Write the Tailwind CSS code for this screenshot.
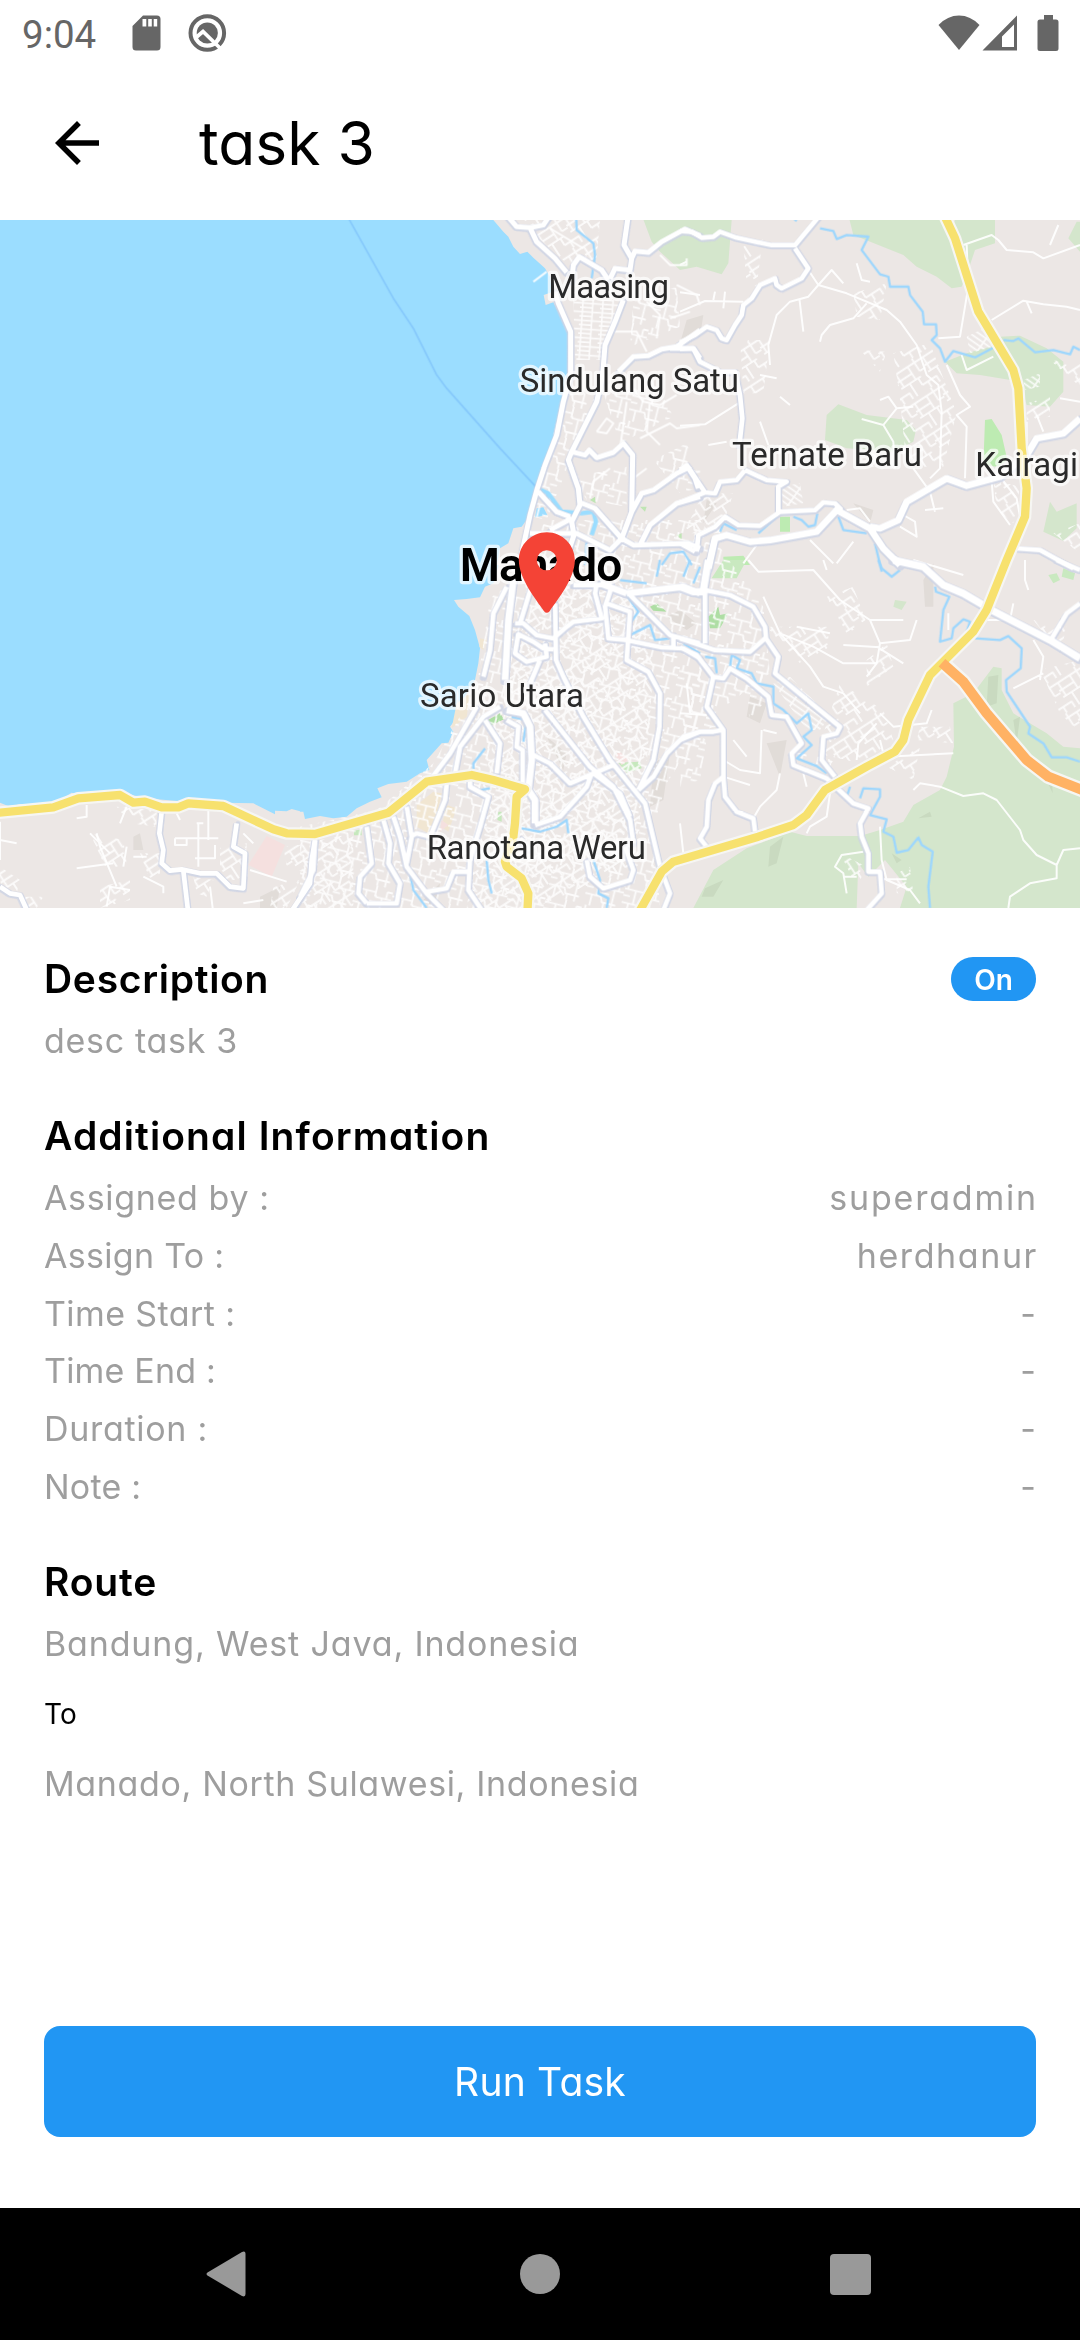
<!DOCTYPE html>
<html lang="en">
<head>
<meta charset="utf-8">
<title>task 3</title>
<script src="https://cdn.jsdelivr.net/npm/@tailwindcss/browser@4"></script>
</head>
<body class="bg-white">
<div class="flex h-[2340px] w-[1080px] flex-col overflow-hidden bg-white font-['Inter',sans-serif] text-black [font-feature-settings:'cv11']">

  <!-- Status bar -->
  <div class="flex h-[66px] shrink-0 items-center pl-[22px] text-[#666]">
    <span class="w-[76px] pt-[3px] font-['Roboto',sans-serif] text-[38.5px] leading-[44px]">9:04</span>
    <svg class="ml-[34px] h-[36px] w-[30px]" viewBox="0 0 30 36" fill="currentColor"><path fill-rule="evenodd" d="M11 .5H25Q28.500 .5 28.500 4V32Q28.500 35.500 25 35.500H4Q.5 35.500 .5 32V11ZM10.500 4V11.500H14.300V4ZM16.200 4V11.500H19.800V4ZM21.700 4V11.500H25.200V4Z"/></svg>
    <svg class="ml-[26px] h-[40px] w-[40px]" viewBox="0 0 40 40" fill="none"><circle cx="19.300" cy="20" r="16.800" stroke="currentColor" stroke-width="4"/><circle cx="19.300" cy="20" r="10.600" fill="currentColor"/><path d="M8 24.500 15 18.500 35 38" stroke="#fff" stroke-width="3.800"/></svg>
    <svg class="ml-auto h-[36px] w-[42px]" viewBox="0 0 42 36" fill="currentColor"><path d="M.5 10Q9.500 .5 21 .5T41.500 10L21 35Z"/></svg>
    <svg class="ml-[2px] h-[36px] w-[36px]" viewBox="0 0 36 36" fill="currentColor"><path fill-rule="evenodd" d="M.5 35.500 35 .5V35.500ZM20 21.500V32H32V9.500Z"/></svg>
    <svg class="mr-[21px] ml-[19px] h-[36px] w-[22px]" viewBox="0 0 22 36" fill="currentColor"><path d="M7 0h9v4.500h3Q21.500 4.500 21.500 7V33.500Q21.500 36 19 36H3Q.5 36 .5 33.500V7Q.5 4.500 3 4.500H7Z"/></svg>
  </div>

  <!-- App bar -->
  <header class="flex h-[154px] shrink-0 items-center pl-[44px]">
    <svg class="size-[66px]" viewBox="0 0 24 24"><path d="M20 11H7.830l5.590-5.590L12 4l-8 8 8 8 1.410-1.410L7.830 13H20v-2z"/></svg>
    <h1 class="ml-[89px] text-[60.5px] leading-[80px]">task 3</h1>
  </header>

  <!-- Map, in thirds of a pixel -->
  <svg class="block h-[688px] w-[1080px] shrink-0" viewBox="0 660 3240 2064" fill="none" stroke-linejoin="round">
    <defs>
      <pattern id="mesh" width="112" height="96" patternUnits="userSpaceOnUse" patternTransform="rotate(14)">
        <path d="M0 20H60L66 34H112M10 0V20M34 20V62M0 62H48L54 78H96M62 34V0M84 34V96M20 62V96M96 12H112M96 12V34M60 96V78M48 50H70M0 40H20" stroke="#fff" stroke-width="5.500" fill="none"/>
      </pattern>
      <pattern id="mesh2" width="96" height="104" patternUnits="userSpaceOnUse" patternTransform="rotate(-33)">
        <path d="M0 14H96M0 38H52M0 60H70M30 60V104M52 14V60M76 0V44M76 44H96M10 14V60M60 84H96M60 84V60M0 84H14V104M80 84V104" stroke="#fff" stroke-width="5.500" fill="none"/>
      </pattern>
      <pattern id="grid" width="60" height="26" patternUnits="userSpaceOnUse" patternTransform="rotate(4)">
        <path d="M0 5H60M0 18H40M8 0V26M38 0V26" stroke="#fff" stroke-width="5" fill="none"/>
      </pattern>
      <pattern id="rows" width="50" height="15" patternUnits="userSpaceOnUse" patternTransform="rotate(35)">
        <path d="M0 5H50M6 0V15" stroke="#fff" stroke-width="5" fill="none"/>
      </pattern>

      <g id="main-roads">
        <g transform="translate(900 645)" stroke-width="15">
          <path d="M620 0 650 35 690 38 710 80 765 130 800 172M765 230 775 265 812 350 812 480 790 560 770 660 735 750 712 820 690 900 660 1040M690 38 730 30 750 0M985 0 972 90 995 130 1005 108 1045 112 1085 80 1155 42 1200 62M995 130 990 165 945 160 930 192M815 200 820 150 838 125 905 165 925 195M970 255 945 320 915 390 908 480 890 560 850 640 815 710 805 735 835 820 840 870 815 920 822 960 795 1040M815 710 855 720 868 705 890 728 940 712 970 685 998 720 995 890 965 970M840 862 885 880 965 970 1000 990 1165 985 1200 1000M750 945 815 910M690 955 830 955 930 1005 965 970M715 830 770 890 810 905M955 470 1000 425 1045 422 1085 402 1130 395 1200 345M1110 400 1180 400 1200 430M995 890 1025 835 1060 825 1130 775 1165 758 1185 790 1195 820M1020 990 1050 930 1130 865 1200 845"/>
        </g>
        <g transform="translate(2040 645)" stroke-width="14">
          <path d="M0 48 35 50 65 68 100 65 120 50 170 68 235 82 275 90 345 90 420 0M345 100 385 160 365 190 305 220 290 210 285 190 240 210 215 250 190 270 185 300 165 330 140 375 125 370 110 345 80 335 45 360 0 382M0 402 40 400 60 440 90 455 120 470 165 470 180 540 187 610 178 690M195 765 170 795 120 800 105 835 75 832 40 780 20 750 0 765M0 862 75 832M195 765 260 795 320 800 295 815 295 890M50 1010 55 960 105 935 135 905 175 930 240 932 300 890 405 885 430 862 465 865 485 885M0 985 45 1010M1010 1000 1080 1005 1180 1060"/>
          <path d="M85 1060 105 970 140 960 210 980 270 975 410 950 470 885 570 940 610 1000 660 1050M570 935 600 940 655 915 680 860 800 790 860 812 960 785 1040 720 1070 670 1150 655 1200 610" stroke-width="20"/>
        </g>
        <g transform="translate(900 1680)" stroke-width="14">
          <path d="M620 80 580 160 570 270 550 350M530 440 450 580 390 660M645 190 670 190 710 225 760 235 800 200 820 185 905 175 885 100 890 70M700 60 660 190M765 130 768 300 790 350 850 470 930 600 1035 730 1080 920 1110 1000 1090 1050M650 220 700 245 730 265 760 268M655 220 645 280 680 305 740 290 735 250M720 300 690 370M820 75 935 75M935 80 915 140 925 235 980 240 1085 262 1150 265 1200 295M920 130 990 155 980 300 1045 335 1080 400 1078 500 1060 600 1015 690M990 105 1110 225 1200 250M1120 225V260M735 450 870 620 940 680 990 780 1000 850M600 440 550 470 480 560 465 640M555 480 600 550 590 640M620 480 655 500 650 560 668 570 668 670M700 585 750 610 810 670 940 615M875 640 860 680 780 770 705 795M1015 690 1060 650 1100 580 1150 530 1200 515M440 670 435 720 390 830 350 820 330 830M510 660V680L565 710 540 800 510 900 505 990 545 1050M250 780 270 850 265 910 300 970 290 1030 200 1030M280 770 300 830 320 920 380 1000 430 1050M320 740 335 830 320 910M200 800 215 910 180 950 175 1000 200 1030M45 840 40 930 0 1010M380 995 440 985 460 935 505 935M880 640 960 700 990 770M860 900 870 950 910 985 990 960 1000 930 975 860M660 835 690 870"/>
          <path d="M640 60 625 180 615 360M620 450 670 460 690 500 695 600 685 690 705 720V790M980 100 1150 80 1200 100M900 70 980 100" stroke-width="20"/>
        </g>
        <g transform="translate(2040 1680)" stroke-width="14">
          <path d="M75 90V250M0 235 105 270 210 275 255 235M0 262 50 285 100 350 130 355 150 325 200 355 265 410 275 465 320 470 365 550 335 580 340 615 440 655 520 730 565 745 540 790 545 830 565 880V935H600L605 1000 560 1050M100 350 80 440 130 510V650L135 710 170 755 220 775 225 815M0 540 60 515 100 515 125 510M130 650 105 670 85 720 80 800 60 835 80 860M1200 130 1160 160 1115 235M1130 0 1200 30M75 90 150 105 220 140 255 200 258 235 295 290 285 340 480 500 470 520 430 530 425 600 465 650"/>
          <path d="M85 0 70 90M0 80 40 95 75 95M640 0 730 20 790 75 850 100 935 150 1110 240 1200 295" stroke-width="22"/>
        </g>
        <g transform="translate(0 2100)" stroke-width="14">
          <path d="M485 335 478 400 490 450 485 490 510 512 545 508 600 520 650 520 690 560 730 565 735 460 700 440 710 370M550 512 565 640M945 420 935 480 930 550 870 640M0 560 30 580 60 585 85 640"/>
        </g>
      </g>

      <g id="highways">
        <path d="M2830 640 2865 715 2935 935 3040 1110 3055 1165 3065 1345 3080 1465 3075 1550 3020 1680 2960 1830 2920 1895 2790 2025 2725 2160 2710 2220 2685 2255 2600 2300 2475 2370 2420 2445 2380 2475 2275 2510 2020 2585 1985 2615 1915 2740"/>
        <path d="M-20 2440 160 2422 235 2395 360 2385 400 2408 435 2405 485 2422H535L565 2410 670 2418 820 2488 860 2500 945 2502 1165 2438 1280 2345 1415 2325 1480 2340 1575 2368 1550 2390 1545 2470 1540 2510 1515 2585 1520 2600 1565 2635 1585 2680 1582 2740"/>
      </g>
    </defs>

    <rect y="660" width="3240" height="2064" fill="#9bddff"/>

    <!-- Land -->
    <g fill="#ece7e5">
      <path transform="translate(900 645)" d="M580 0V15L610 50 625 65 640 95 660 117 682 110 700 128 735 160 750 185 755 232 731 240 737 270 760 262 785 310 805 355 803 480 790 560 770 650 740 740 712 820 690 900 665 935 640 940 625 985 600 1000 590 1050H2340V0Z"/>
      <path transform="translate(900 1680)" d="M600 0 580 70 555 80 540 112 500 117 462 120 475 140 508 168 525 210 540 265 535 310 525 360 500 400 468 450 465 480 450 500 460 515 445 548 425 550 380 600 388 630 360 640 320 665 265 672 232 685 245 712 210 725 170 745 140 770 100 775 60 768 15 777 10 755 0 755V1044H2340V0Z"/>
      <path transform="translate(0 2100)" d="M900 334 875 327 860 334 825 332V343L760 310 670 308 560 305 435 295 360 275 230 282 215 278 160 312 60 312 30 320 0 308V624H910Z"/>
    </g>
    <path d="M1610 1525 1630 1522 1642 1545 1605 1552ZM1640 1475 1685 1535 1680 1550 1635 1500Z" fill="#9bddff"/>

    <!-- Relief -->
    <g fill="#e1dcd8">
      <path d="M2060 960 2110 945 2100 1010 2040 1030ZM2120 1500 2150 1510 2110 1570ZM2560 1510 2620 1530 2610 1570ZM1960 2290 2010 2260 1990 2400 1950 2420ZM2250 2090 2300 2110 2280 2170 2240 2150ZM2300 2230 2360 2220 2340 2330ZM2770 1740 2800 1690V1820H2775ZM1640 2210 1700 2260 1690 2310ZM400 2510 420 2500 430 2550 400 2550ZM2000 1850 2040 1830 2090 1870 2060 1890ZM780 2690 840 2660 830 2724H780ZM1270 2700 1320 2650 1310 2724Z"/>
    </g>

    <!-- Parks and forest -->
    <g fill="#d4e6cc">
      <path transform="translate(2040 645)" d="M-115 0H155V15L145 145 125 178 50 155 0 165-60 110-85 80ZM505 0H780L815 40 825 15H945V85L885 105 870 150 845 215 815 220 770 185 710 155 670 120 520 60ZM440 600 475 568 560 600 680 615 708 645 700 680 640 710 500 700 435 675ZM795 440 860 415 950 390 960 365 1020 362 1100 400 1150 440V530L1110 575 1040 570 1020 500 900 480 830 475ZM1165 70 1190 20H1200V110ZM1090 950 1110 860 1130 890 1190 865V940L1150 978Z"/>
      <path transform="translate(2040 1680)" d="M820 430 880 400 940 320 965 325V390L1000 460 1100 520 1150 560 1200 565V1044H40L100 930 200 865 330 815 380 828H540L600 810 670 785 700 735 780 690 800 650 822 560Z"/>
      <path transform="translate(2040 1680)" d="M645 120 680 125 665 150 640 140Z"/>
    </g>
    <path transform="translate(2040 1680)" d="M535 910 565 950 615 900 680 980 660 1044H530Z" fill="#ece7e5"/>
    <path transform="translate(2040 1680)" d="M925 350 955 345 950 430 920 440ZM1000 480 1020 470 1010 550ZM270 860 310 830 290 910 265 920ZM75 985 130 960 100 1010 65 1010ZM715 775 750 755 755 770ZM635 880 665 900 650 910ZM1090 640 1115 640 1118 700Z" fill="#c9dac0"/>
    <path transform="translate(2040 645)" d="M915 615 935 612 965 660 982 735 950 755 910 750ZM130 1025 190 1022 210 1050H130ZM300 905H330V950H300Z" fill="#bdebb2"/>
    <path transform="translate(2040 1680)" d="M95 55 130 0H200L170 55ZM1105 45 1130 40 1140 60 1120 70ZM1150 25 1185 40 1180 60 1145 50Z" fill="#c9e9c0"/>
    <path transform="translate(2040 1680)" d="M85 170 115 140 120 165 145 160 120 205H90Z" fill="#aedea4"/>
    <path transform="translate(900 1680)" d="M1050 140 1070 130 1100 155 1060 152ZM555 485 600 460 612 478 570 497Z" fill="#aedea4"/>
    <path transform="translate(900 1680)" d="M955 608 1020 605 1025 625 980 638ZM162 812 185 808V826H162ZM435 750 450 740 455 755 440 768ZM595 755 605 755V785L592 780Z" fill="#c6e8bd"/>
    <path d="M1770 1500 1785 1490 1787 1510ZM1920 1520H1940L1935 1535ZM2030 1605 2045 1600V1620Z" fill="#bfe5b4"/>
    <path transform="translate(900 1680)" d="M350 735 400 695 425 700 410 770 385 820 350 800ZM440 735 470 745 445 815 425 800ZM540 235 560 240 550 270 538 260ZM470 430 510 400 500 470 455 505Z" fill="#f1e6d2"/>
    <path d="M800 2508 855 2535 815 2630 745 2595ZM1845 2265 1860 2255 1885 2280 1865 2295ZM1325 2460 1345 2475 1320 2495Z" fill="#f5e0df"/>

    <!-- Local streets -->
    <g opacity=".85">
      <path fill="url(#mesh2)" d="M1560 660H1800L1790 780 1700 790 1600 700ZM2230 740 2290 700 2270 860 2240 850ZM2220 1020 2310 1020 2290 1180 2230 1180ZM2680 1060 2790 1030 2870 1240 2830 1400 2720 1400 2700 1200ZM2560 880 2660 850 2640 960 2570 950ZM2580 1050 2660 1055 2640 1115ZM2980 1440 3060 1460 3040 1570 2990 1530Z"/>
      <path fill="url(#grid)" d="M1720 900 1870 900 1810 1080 1725 1080Z"/>
      <path fill="url(#mesh)" d="M1690 1180 1790 1180 1640 1560 1600 1550ZM1810 1180 1960 1130 2020 1250 1860 1330ZM1900 900 2030 860 2040 980 1890 1040ZM1720 1430 1880 1400 1880 1520 1760 1500ZM1960 1380 2060 1330 2110 1460 2040 1480Z"/>
      <path fill="url(#mesh)" d="M1470 1800 1640 1560 2100 1560 2290 1820 2310 2020 2130 2150 2000 2350 1960 2480 1980 2724H900V2480L1130 2430 1300 2290 1430 2060Z"/>
      <path fill="url(#mesh2)" d="M1560 1900 1660 1700 1900 1760 1960 2000 1940 2300 1900 2600 1600 2724 1400 2724 1450 2350Z"/>
      <path fill="url(#mesh2)" d="M2480 1790 2560 1760 2600 1870 2540 1900ZM2300 1880 2480 1880 2490 1940 2400 1990ZM2600 1980 2660 1930 2680 2000 2600 2060ZM2520 2050 2650 2130 2680 2220 2580 2290 2450 2260ZM2760 2180 2850 2180 2860 2230 2750 2220ZM2660 2300 2760 2240 2740 2340ZM3120 2010 3240 1980V2200L3180 2140ZM3100 1860 3200 1880 3180 1960ZM3160 1600 3240 1570V1660ZM3080 1210 3150 1190 3150 1250 3080 1260ZM3150 1080 3240 1090V1160ZM2050 1600 2110 1480 2200 1480 2160 1600ZM2690 2620 2730 2600 2740 2680 2690 2680ZM2520 2560 2600 2600 2570 2660Z"/>
      <path fill="url(#rows)" d="M2320 2050 2370 2030 2490 2150 2460 2190 2420 2190ZM2900 1010 2960 980 2980 1040 2910 1060ZM3070 1140 3120 1120V1160L3075 1170ZM2340 1460 2400 1450 2410 1510 2350 1520ZM2610 1360 2640 1350V1400L2600 1400Z"/>
      <path fill="url(#mesh)" d="M2050 2020 2130 1980 2150 2180 2060 2200ZM2230 2060 2290 2000 2290 2110 2250 2160ZM2360 2250 2500 2280 2480 2320ZM2050 2180 2120 2220 2100 2340 2040 2360Z"/>
      <path fill="url(#mesh2)" d="M270 2500 370 2520 380 2590 320 2610ZM300 2660 390 2640 390 2700 300 2724ZM350 2420 470 2430 470 2480 390 2470ZM420 2560 480 2560 480 2620 450 2640ZM850 2540 940 2530 920 2620 860 2600ZM820 2660 900 2640 860 2724H810ZM960 2520 1060 2500V2724H900L950 2600ZM660 2540 740 2530 740 2640 660 2640ZM0 2600 60 2640 50 2680 0 2650ZM60 2690 130 2690 110 2724H70ZM580 2630 640 2640 620 2690 590 2680Z"/>
    </g>
    <g stroke="#fff" stroke-width="6" opacity=".9">
      <path transform="translate(2040 645)" d="M850 90 935 60 955 75 980 105 1060 112 1090 130 1200 90M1110 90 1135 30M935 315 1030 257 1090 268 1160 275 1200 285M1040 260 1055 295M385 165 415 210 455 165 490 205M415 210 500 235 620 285 660 320 710 390 740 480 775 510 785 590 780 760 750 790M415 210 385 245 330 260 290 300 265 390 270 450M358 250 370 350M420 380 425 360 450 330 520 310 560 265M530 145 545 195 570 200M545 612 610 630 650 580 700 575M600 555 625 545 650 580M610 630 640 680 645 760M860 90 865 215 840 365 775 370M845 420 860 465 940 425M800 450 840 540 870 575 830 600 860 635 855 790M0 290 75 258 190 260M100 255 105 230M130 280 135 230M0 232 60 240M0 632 75 628 175 565M240 620 265 690M85 690 140 680M0 150 20 140M935 800 940 860 990 930M960 785 1010 850 1020 905M700 760 750 830 765 890M735 885 790 880M660 935 710 965 705 920 670 900M500 885 540 880 570 920M390 975 460 1045M520 980 470 1045M230 990 190 1045M300 545 330 570M240 480 290 490M1040 690 1040 620M1070 600 1090 650M1140 550 1200 560"/>
      <path transform="translate(2040 1680)" d="M205 0 235 35 400 30 440 75 480 120 570 180 600 250 690 240 710 180M570 180 670 180M600 250 590 310H490L400 260 300 220 250 110M490 255 600 262M590 310 560 350M590 260 670 310M300 220 390 320 430 380 490 400 540 460M350 200 450 220M430 0 440 30M700 0 850 45M755 450 740 490 640 500 600 460M620 590 820 580M700 690 720 670 780 680 850 708 910 700 950 720 1020 810 1030 840 1070 885 1130 915V955L1050 970 990 1010 985 1044M1130 915 1150 870 1200 865M245 510 240 640 180 630 130 600M300 640 290 690 240 740 220 775M160 540 200 590M130 650 210 675M20 370 30 460M0 460 80 465M550 875 485 885 465 920 490 940 500 1000M490 950H530M600 800 605 900 620 960 690 990 720 1030M610 958H680M450 700 440 770 390 800 380 820M1035 0V60L1045 90M1000 385 1090 340M1060 240 1090 290 1080 360M1000 130 990 180 900 180M805 160V210M0 790 10 880M250 510 290 520M530 600 535 550 590 490M600 540 610 580M380 680 370 640"/>
      <path transform="translate(0 2100)" d="M525 415H655M525 415V435H560V415M595 370V500M645 435V475H585M625 330V420M590 370H610M260 315V350L230 355M380 320 360 370M290 400 300 440 350 560M270 400 330 460M230 505 340 490M440 470H400M430 530 490 560V580M320 620 330 560 390 570M0 365V480M0 420 50 430M370 500 380 440M530 340 540 360M750 510 860 545M730 400 760 430M740 360 800 380M740 490V530M630 560 640 640M730 610 790 600"/>
      <path transform="translate(900 645)" d="M1000 520 1030 560 1080 570 1130 540M1050 560 1040 650 1080 690M960 700 980 560M1200 630 1130 640 1110 625 1020 670M890 650 920 610 940 625 920 655 890 650M740 170 700 200M1130 210 1190 240 1200 270M1040 260 1080 300 1070 370M940 350 1010 350 1040 410M1110 780 1200 770M870 850 880 800 930 760M1000 790 1040 760M1080 120 1110 150 1160 150V130M750 40 850 100M1170 290 1110 310"/>
    </g>

    <!-- Rivers and ferry line -->
    <path d="M1040 645 1180 895 1240 985 1310 1125 1340 1165 1500 1345 1612 1465" stroke="#85c8fb" stroke-width="5"/>
    <path d="M1612 1465 1645 1480 1685 1535 1745 1540 1780 1535 1788 1565 1775 1605" stroke="#9bddff" stroke-width="13"/>
    <g stroke="#9cd6fd" stroke-width="7">
      <path transform="translate(900 645)" d="M828 0 830 45 880 85 885 120 875 190M860 980 855 1050M1085 1050 1110 1015 1150 1010 1175 1050"/>
      <path transform="translate(2040 645)" d="M330 0 350 18M420 40 460 48 470 72 500 60 565 65 545 105 600 178 625 185 630 215 685 215 690 240 728 290 732 328H768L770 360 755 375 780 400 795 440 820 408 885 427 940 398M970 375 1000 378 1015 370 1065 412 1120 405 1170 418 1180 395 1200 405M475 905 490 945 560 955M235 955 290 905M340 905 365 915 385 935 405 930 412 895M585 985 605 1070M120 950 130 925 170 945"/>
      <path transform="translate(900 1680)" d="M980 105 1015 155 990 190M990 225 1050 195 1065 240 1110 235M1080 0 1070 50M960 60 1040 70M555 565 520 610V630M540 690 570 685M635 470 680 480 670 545M665 805 720 815 770 800 800 780 805 820M880 900 900 960 895 1000 925 1015 920 1044M560 900 565 960 575 1000M330 940 340 990 380 1044M1150 250 1200 280"/>
      <path transform="translate(2040 1680)" d="M595 0 605 25 635 50 660 30M765 80 768 95 808 110 790 150 780 245 815 235 820 205 850 178 870 185 860 215M885 235 960 240 985 228 1025 265 1022 325 978 360 980 395 1050 500 1045 520 1090 550 1115 592H1160L1200 605M75 290 105 295 110 340M150 320 155 285 180 300 170 325 215 340 230 370 280 380V430L310 450 350 490 385 460 395 510 370 530 395 555 350 595 410 618 440 640M510 680 500 710M540 715 550 685 600 688V710L570 765 620 778 610 815 640 830 650 878 685 870 715 832 725 855 758 875 745 980 750 1044M30 0 10 50M60 20 40 70"/>
    </g>

    <!-- Roads -->
    <g transform="translate(0 3)" stroke="#ced4e5" opacity=".85" stroke-linecap="round">
      <use href="#main-roads" transform="translate(-4 2)"/>
      <use href="#main-roads" transform="translate(4 -3)"/>
      <use href="#main-roads" transform="translate(3 3)"/>
    </g>
    <use href="#main-roads" stroke="#fff"/>
    <use href="#highways" stroke="#f6f6f3" stroke-width="38"/>
    <path d="M2830 1990 2890 2045 2960 2140 3080 2280 3145 2330 3260 2375" stroke="#f6f6f3" stroke-width="44"/>
    <use href="#highways" stroke="#f7e16e" stroke-width="25"/>
    <path d="M2826 1988 2890 2045 2960 2140 3080 2280 3145 2330 3260 2375" stroke="#ffb264" stroke-width="30"/>

    <!-- Place names -->
    <g font-family="Roboto, sans-serif" font-size="99" fill="#2a2a2a" stroke="#fff" stroke-opacity=".7" stroke-width="19" paint-order="stroke">
      <text x="1645" y="893" textLength="362">Maasing</text>
      <text x="1559" y="1176" textLength="658">Sindulang Satu</text>
      <text x="2196" y="1397" textLength="570">Ternate Baru</text>
      <text x="2926" y="1427" textLength="308">Kairagi</text>
      <text x="1260" y="2120" textLength="492">Sario Utara</text>
      <text x="1280" y="2577" textLength="658">Ranotana Weru</text>
      <text x="1379" y="1742" textLength="488" font-size="138" font-weight="600" fill="#000">Manado</text>
    </g>

    <!-- Marker -->
    <path transform="translate(1496.500 1573) scale(12)" fill="#f44336" fill-rule="evenodd" d="M12 2C8.130 2 5 5.130 5 9c0 4.600 4.300 9.800 6.300 12.700Q12 22.500 12.700 21.700C14.700 18.800 19 13.600 19 9c0-3.870-3.130-7-7-7zm0 9.500a2.500 2.500 0 1 1 0-5 2.500 2.500 0 0 1 0 5z"/>
  </svg>

  <!-- Task details -->
  <main class="flex flex-col px-[44px] pt-[49px] text-[34px] leading-[58px] text-[#9e9e9e]">
    <div class="flex h-[44px] items-center justify-between">
      <h2 class="text-[39px] leading-[44px] font-semibold tracking-[0.7px] text-black">Description</h2>
      <span class="flex h-[44px] w-[85px] items-center justify-center rounded-[22px] bg-[#2196f3] pt-[3px] text-[28px] leading-[41px] font-semibold text-white">On</span>
    </div>
    <p class="mt-[11px] tracking-[0.7px]">desc task 3</p>

    <h2 class="mt-[44px] text-[39px] leading-[44px] font-semibold tracking-[1.1px] text-black">Additional Information</h2>
    <dl class="mt-[11px] flex flex-col leading-[57.75px]">
      <div class="flex justify-between"><dt class="tracking-[0.65px]">Assigned by :</dt><dd class="-mr-[2px] tracking-[1.8px]">superadmin</dd></div>
      <div class="flex justify-between"><dt class="tracking-[0.3px]">Assign To :</dt><dd class="-mr-[2px] tracking-[1.6px]">herdhanur</dd></div>
      <div class="flex justify-between"><dt class="tracking-[0.4px]">Time Start :</dt><dd>-</dd></div>
      <div class="flex justify-between"><dt class="tracking-[0.2px]">Time End :</dt><dd>-</dd></div>
      <div class="flex justify-between"><dt class="tracking-[0.7px]">Duration :</dt><dd>-</dd></div>
      <div class="flex justify-between"><dt class="tracking-[0.2px]">Note :</dt><dd>-</dd></div>
    </dl>

    <h2 class="mt-[44px] text-[39px] leading-[44px] font-semibold tracking-[0.8px] text-black">Route</h2>
    <p class="mt-[11px] tracking-[0.85px]">Bandung, West Java, Indonesia</p>
    <p class="text-[28px] leading-[82px] text-black">To</p>
    <p class="tracking-[0.65px]">Manado, North Sulawesi, Indonesia</p>
  </main>

  <div class="mt-auto px-[44px] pb-[71px]">
    <button class="block h-[111px] w-full rounded-[16px] bg-[#2196f3] text-[39px] leading-[111px] tracking-[0.2px] text-white">Run Task</button>
  </div>

  <!-- System navigation -->
  <nav class="flex h-[132px] shrink-0 items-center bg-black pl-[206px] text-[#999]">
    <svg class="h-[46px] w-[40px]" viewBox="0 0 40 46" fill="currentColor"><path d="M1.500 21.500 36 1Q39.500-.5 39.500 3V43Q39.500 46.500 36 45L1.500 24.500Q-.5 23 1.500 21.500Z"/></svg>
    <span class="ml-[274px] size-[40px] rounded-full bg-[#999]"></span>
    <span class="ml-[270px] size-[41px] rounded-[4px] bg-[#999]"></span>
  </nav>
</div>
</body>
</html>
